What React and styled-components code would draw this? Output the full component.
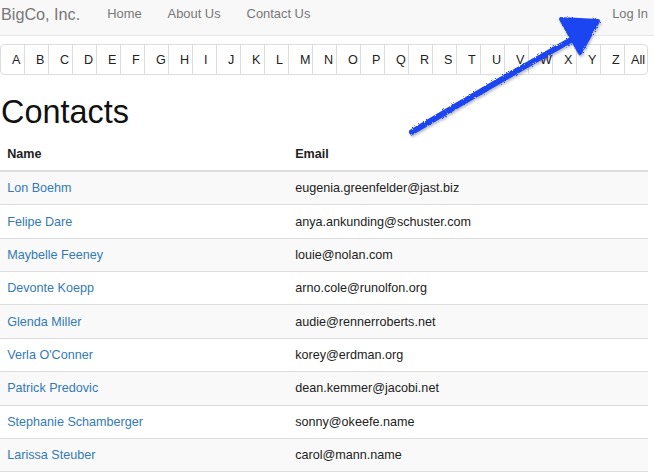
import React from "react";
import styled, { createGlobalStyle } from "styled-components";

const Global = createGlobalStyle`
  html, body { margin: 0; padding: 0; background: #fff; }
  body {
    font-family: "Liberation Sans", Helvetica, Arial, sans-serif;
    font-size: 12.6px;
    line-height: 18px;
    color: #333;
    overflow: hidden;
  }
  * { box-sizing: border-box; }
`;

const Page = styled.div`
  position: relative;
  width: 654px;
  height: 472px;
  overflow: hidden;
`;

const Navbar = styled.nav`
  display: flex;
  align-items: center;
  height: 36px;
  padding: 0 6px 8px 1px;
  background: #f8f8f8;
  border-bottom: 1px solid #e7e7e7;
  width: 654px;
`;

const Brand = styled.a`
  font-size: 16.2px;
  line-height: 18px;
  color: #777;
  margin-right: 14px;
  text-decoration: none;
`;

const NavLink = styled.a`
  font-size: 12.9px;
  line-height: 18px;
  color: #777;
  padding: 0 13px;
  text-decoration: none;
  margin-left: ${(p) => (p.$push ? "auto" : "0")};
  padding-right: ${(p) => (p.$push ? "0" : "13px")};
`;

const Content = styled.main`
  width: 648px;
`;

const Letters = styled.div`
  display: grid;
  grid-template-columns: 23px repeat(26, 24px);
  width: 648px;
  height: 31px;
  margin: 8px 0 0 0;
  border: 1px solid #ddd;
  border-radius: 4px;
  overflow: hidden;
`;

const Letter = styled.a`
  display: flex;
  align-items: center;
  justify-content: flex-start;
  padding-left: ${(p) => p.$pad}px;
  border-left: ${(p) => (p.$first ? "none" : "1px solid #ddd")};
  color: #222;
  font-size: 12.6px;
  text-decoration: none;
  white-space: nowrap;
  overflow: hidden;
`;

const Title = styled.h1`
  font-size: 32.4px;
  line-height: 35.6px;
  font-weight: 400;
  color: #111;
  margin: 20px 0 7px 0;
  padding-left: 1px;
`;

const Table = styled.table`
  width: 648px;
  border-collapse: collapse;
  border-spacing: 0;
`;

const Th = styled.th`
  text-align: left;
  font-weight: 700;
  color: #222;
  padding: 7.2px 7.2px;
  line-height: 18px;
  border-bottom: 2px solid #ddd;
  width: ${(p) => p.$w || "auto"};
`;

const Tr = styled.tr`
  background: ${(p) => (p.$odd ? "#f9f9f9" : "#fff")};
`;

const Td = styled.td`
  padding: 7.2px 7.2px;
  line-height: 18px;
  border-bottom: 1px solid #ddd;
  color: #222;
`;

const NameLink = styled.a`
  color: #337ab7;
  text-decoration: none;
`;

const Overlay = styled.svg`
  position: absolute;
  left: 0;
  top: 0;
  pointer-events: none;
`;

const letters = "ABCDEFGHIJKLMNOPQRSTUVWXYZ".split("").concat("All");

const contacts = [
  ["Lon Boehm", "eugenia.greenfelder@jast.biz"],
  ["Felipe Dare", "anya.ankunding@schuster.com"],
  ["Maybelle Feeney", "louie@nolan.com"],
  ["Devonte Koepp", "arno.cole@runolfon.org"],
  ["Glenda Miller", "audie@rennerroberts.net"],
  ["Verla O'Conner", "korey@erdman.org"],
  ["Patrick Predovic", "dean.kemmer@jacobi.net"],
  ["Stephanie Schamberger", "sonny@okeefe.name"],
  ["Larissa Steuber", "carol@mann.name"],
];

function Arrow() {
  return (
    <Overlay width="654" height="472" viewBox="0 0 654 472">
      <defs>
        <filter id="rough" x="-10%" y="-10%" width="120%" height="120%">
          <feTurbulence type="fractalNoise" baseFrequency="0.9" numOctaves="2" result="n" />
          <feDisplacementMap in="SourceGraphic" in2="n" scale="3" result="d" />
          <feDropShadow dx="1" dy="2" stdDeviation="1.2" floodColor="#000" floodOpacity="0.25" />
        </filter>
      </defs>
      <g filter="url(#rough)" fill="#1f45f2" stroke="#1f45f2" strokeLinecap="round" strokeLinejoin="round">
        <path d="M412 132 Q 500 80 578 36" strokeWidth="6" fill="none" />
        <polygon points="561,19 598,21 580,53" strokeWidth="4" />
      </g>
    </Overlay>
  );
}

export default function App() {
  return (
    <Page>
      <Global />
      <Navbar>
        <Brand href="#">BigCo, Inc.</Brand>
        <NavLink href="#">Home</NavLink>
        <NavLink href="#">About Us</NavLink>
        <NavLink href="#">Contact Us</NavLink>
        <NavLink href="#" $push>Log In</NavLink>
      </Navbar>
      <Content>
        <Letters>
          {letters.map((l, i) => (
            <Letter
              key={l}
              href="#"
              $first={i === 0}
              $pad={i === letters.length - 1 ? 6 : 11}
            >
              {l}
            </Letter>
          ))}
        </Letters>
        <Title>Contacts</Title>
        <Table>
          <thead>
            <tr>
              <Th $w="288px">Name</Th>
              <Th>Email</Th>
            </tr>
          </thead>
          <tbody>
            {contacts.map(([n, e], i) => (
              <Tr key={n} $odd={i % 2 === 0}>
                <Td><NameLink href="#">{n}</NameLink></Td>
                <Td>{e}</Td>
              </Tr>
            ))}
          </tbody>
        </Table>
      </Content>
      <Arrow />
    </Page>
  );
}
